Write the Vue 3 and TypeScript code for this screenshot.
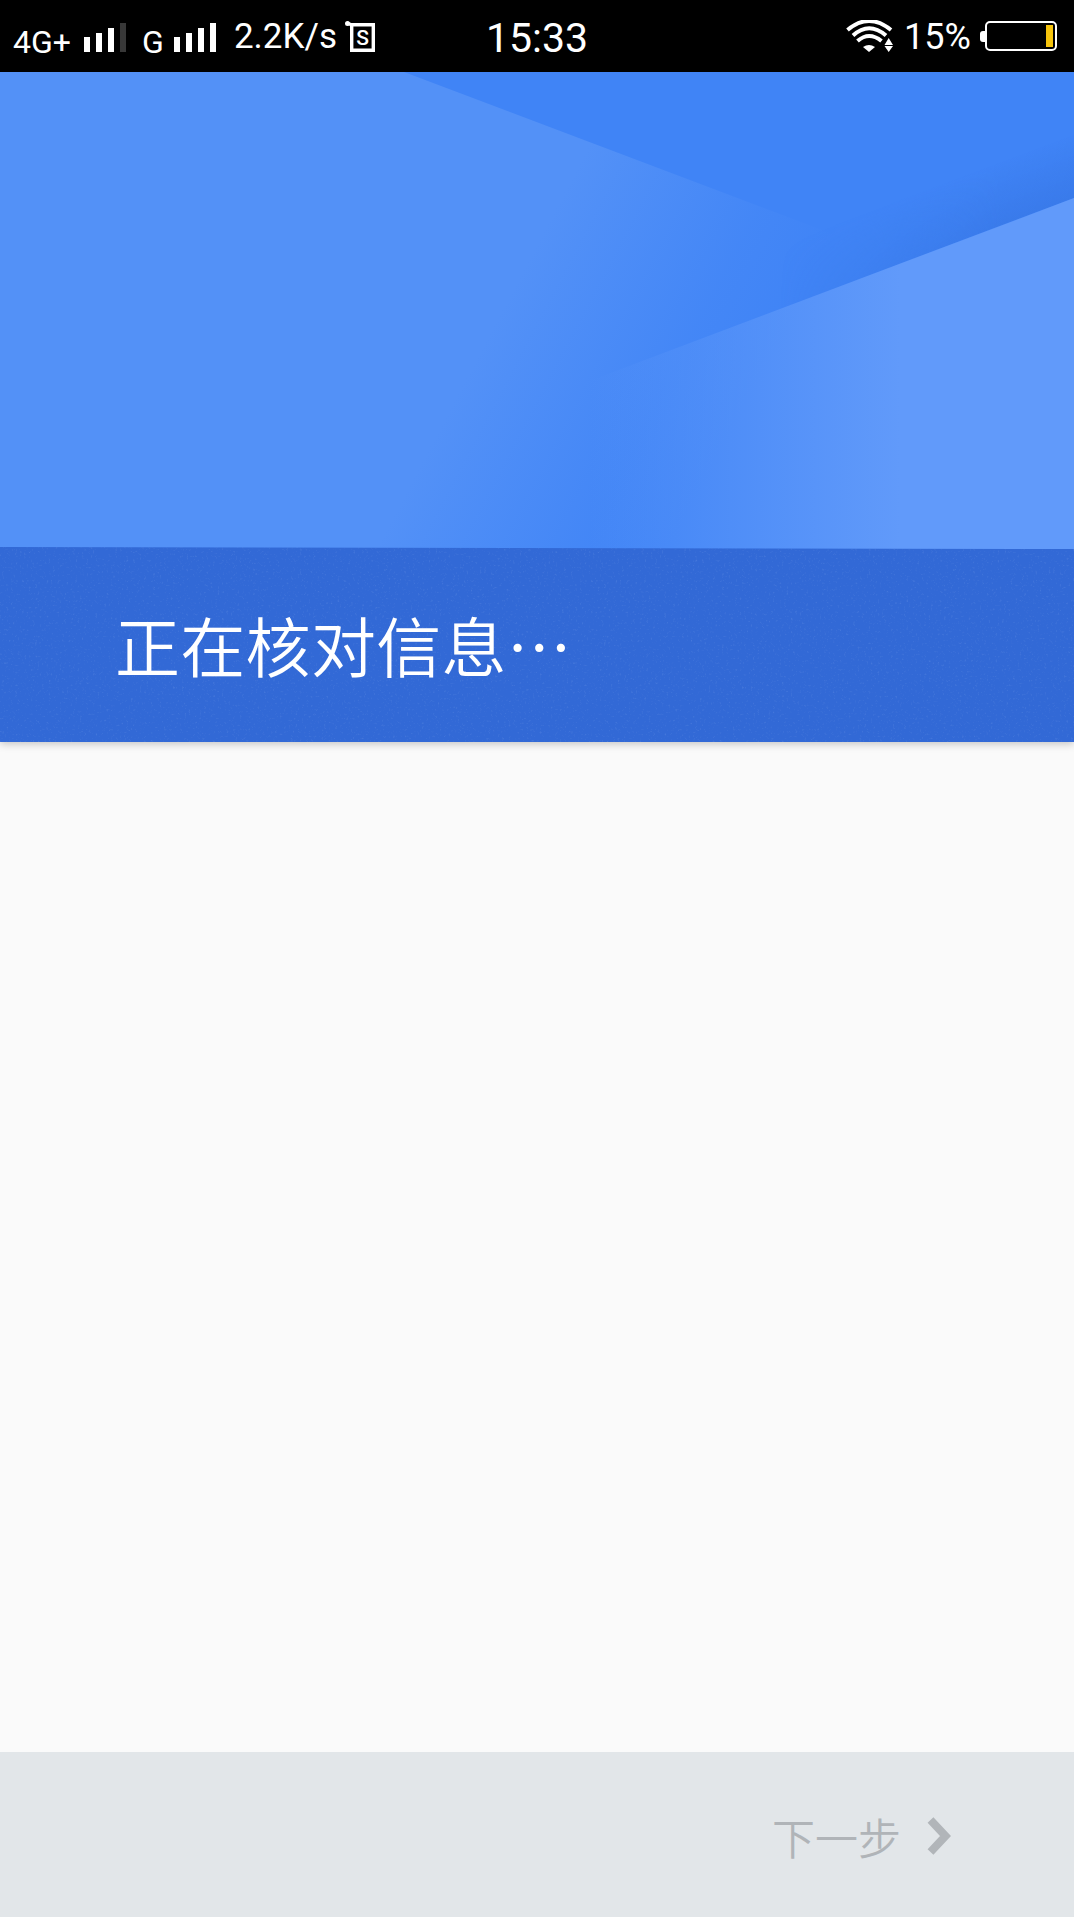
<script setup lang="ts">
const firstBars = [15, 19, 24, 29]
const secondBars = [15, 19, 24, 29]
</script>

<template>
  <div class="page">
    <header class="status">
      <div class="status-left">
        <span class="net">4G+</span>
        <span class="bars first">
          <i v-for="(h, i) in firstBars" :key="i" :class="{ dim: i === 3 }" :style="{ height: h + 'px' }"></i>
        </span>
        <span class="net g">G</span>
        <span class="bars second">
          <i v-for="(h, i) in secondBars" :key="i" :style="{ height: h + 'px' }"></i>
        </span>
        <span class="speed">2.2K/s</span>
        <svg class="sicon" width="30" height="31" viewBox="0 0 30 31">
          <path d="M6.7 3.7H28.3V29.3H6.7Z" fill="none" stroke="#fff" stroke-width="3.4" />
          <circle cx="2.5" cy="2.5" r="2.5" fill="#fff" />
          <path d="M2 2L7 4" stroke="#fff" stroke-width="3" />
          <text x="17.5" y="24" text-anchor="middle" class="sglyph">S</text>
        </svg>
      </div>
      <div class="time">15:33</div>
      <div class="status-right">
        <svg class="wifi" width="47" height="32" viewBox="0 0 47 32">
          <path d="M1.5 10 Q23 -8 45 10" fill="none" stroke="#fff" stroke-width="4" />
          <path d="M7 15.5 Q23 1 40 15.5" fill="none" stroke="#fff" stroke-width="4" />
          <path d="M11.5 21 Q23 11 35.5 21" fill="none" stroke="#fff" stroke-width="4" />
          <path d="M17 27 Q23 23 29 27 L23 32Z" fill="#fff" />
          <path d="M38.5 25 L42.7 18 L47 25Z M38.5 26 H47 L42.7 32Z" fill="#fff" />
        </svg>
        <span class="pct">15%</span>
        <span class="battery">
          <span class="nub"></span>
          <span class="cell"><span class="level"></span></span>
        </span>
      </div>
    </header>

    <section class="hero">
      <svg class="hero-art" width="1074" height="670" viewBox="0 0 1074 670" preserveAspectRatio="none">
        <defs>
          <linearGradient id="leftFade" gradientUnits="userSpaceOnUse" x1="491" y1="259" x2="720" y2="380">
            <stop offset="0" stop-color="#5391f7" />
            <stop offset="0.7" stop-color="#5391f7" stop-opacity="0.2" />
            <stop offset="1" stop-color="#5391f7" stop-opacity="0" />
          </linearGradient>
          <linearGradient id="rightFade" gradientUnits="userSpaceOnUse" x1="590" y1="0" x2="900" y2="0">
            <stop offset="0" stop-color="#619afa" stop-opacity="0" />
            <stop offset="1" stop-color="#619afa" />
          </linearGradient>
          <linearGradient id="edgeShade" gradientUnits="userSpaceOnUse" x1="1000" y1="154" x2="979" y2="98">
            <stop offset="0" stop-color="#2f6bd8" stop-opacity="0.38" />
            <stop offset="1" stop-color="#2f6bd8" stop-opacity="0" />
          </linearGradient>
          <linearGradient id="edgeMaskFill" gradientUnits="userSpaceOnUse" x1="780" y1="0" x2="1000" y2="0">
            <stop offset="0" stop-color="#000" />
            <stop offset="1" stop-color="#fff" />
          </linearGradient>
          <mask id="edgeMask" maskUnits="userSpaceOnUse" x="0" y="0" width="1074" height="670">
            <rect width="1074" height="670" fill="url(#edgeMaskFill)" />
          </mask>
        </defs>
        <rect width="1074" height="670" fill="#4084f6" />
        <polygon points="0,0 404,0 1000,225 1000,670 0,670" fill="url(#leftFade)" />
        <polygon points="1074,126 700,267 700,0 1074,0" fill="url(#edgeShade)" mask="url(#edgeMask)" />
        <polygon points="1074,126 560,320 560,670 1074,670" fill="url(#rightFade)" />
      </svg>
      <div class="band">
        <svg class="grain" width="1074" height="195">
          <filter id="speckle">
            <feTurbulence type="fractalNoise" baseFrequency="0.45" numOctaves="2" seed="4" />
            <feColorMatrix values="0 0 0 0 0.55  0 0 0 0 0.7  0 0 0 0 1  0 0 0 3 -1.75" />
          </filter>
          <rect width="1074" height="195" filter="url(#speckle)" opacity="0.13" />
        </svg>
        <h1 class="title">正在核对信息…</h1>
      </div>
    </section>

    <main class="content"></main>

    <footer class="foot">
      <button class="next" type="button" disabled>
        <span>下一步</span>
        <svg width="24" height="38" viewBox="0 0 24 38">
          <path d="M3.5 3 L18.5 19 L3.5 35" fill="none" stroke="#b1b5b9" stroke-width="8" />
        </svg>
      </button>
    </footer>
  </div>
</template>

<style>
html, body { margin: 0; background: #fafafa; }
</style>

<style scoped>
.page {
  width: 1074px;
  height: 1917px;
  display: flex;
  flex-direction: column;
  overflow: hidden;
  font-family: Roboto, "Noto Sans CJK SC", sans-serif;
  background: #fafafa;
}
.status {
  height: 72px;
  flex: none;
  background: #000;
  color: #fff;
  display: grid;
  grid-template-columns: 486px 100px 1fr;
  align-items: start;
}
.status-left { display: flex; align-items: flex-start; height: 72px; padding-left: 13px; }
.net { font-size: 32px; line-height: 38px; margin-top: 23px; }
.net.g { margin-left: 16px; width: 32px; }
.bars { display: flex; align-items: flex-end; gap: 6px; height: 29px; margin-top: 23px; margin-left: 13px; }
.bars.second { margin-left: 0; }
.bars i { display: block; width: 6px; background: #fff; }
.bars i.dim { background: #383838; }
.speed { font-size: 35px; line-height: 42px; margin: 16px 0 0 18px; }
.sicon { margin: 21px 0 0 8px; }
.sglyph { font: 500 21px Roboto, sans-serif; fill: #fff; }
.time { font-size: 41px; line-height: 48px; margin-top: 14px; white-space: nowrap; }
.status-right { display: flex; align-items: flex-start; height: 72px; padding-left: 260px; }
.wifi { margin-top: 20px; flex: none; }
.pct { font-size: 36px; line-height: 42px; margin: 16px 0 0 11px; }
.battery { display: flex; align-items: center; height: 30px; margin: 21px 0 0 9px; }
.nub { width: 5px; height: 11px; background: #fff; border-radius: 3px 0 0 3px; }
.cell {
  box-sizing: border-box;
  width: 72px;
  height: 30px;
  border: 2px solid #fff;
  border-radius: 5px;
  display: flex;
  justify-content: flex-end;
  padding: 2px;
}
.level { width: 7px; background: #f6c40c; }
.hero {
  position: relative;
  z-index: 1;
  height: 670px;
  flex: none;
  display: flex;
  flex-direction: column;
  justify-content: flex-end;
  box-shadow: 0 2px 8px rgba(0, 0, 0, 0.22);
}
.hero-art { position: absolute; inset: 0; }
.band {
  position: relative;
  box-sizing: border-box;
  height: 195px;
  background: #3269d6;
  clip-path: polygon(0 0, 100% 2px, 100% 100%, 0 100%);
  display: flex;
  align-items: center;
  padding: 0 0 2px 115px;
}
.grain { position: absolute; inset: 0; }
.title {
  position: relative;
  margin: 0;
  color: #fff;
  font: 350 65px/80px "Noto Sans CJK SC", sans-serif;
  letter-spacing: 0.3px;
  white-space: nowrap;
}
.content { flex: 1; background: #fafafa; }
.foot {
  height: 165px;
  flex: none;
  background: #e2e6e9;
  display: flex;
  justify-content: flex-end;
  align-items: flex-start;
}
.next {
  display: flex;
  align-items: center;
  gap: 26px;
  margin: 59px 123px 0 0;
  padding: 0;
  border: 0;
  background: none;
  color: #b0b4b8;
  font: 350 43px/50px "Noto Sans CJK SC", sans-serif;
}
</style>
